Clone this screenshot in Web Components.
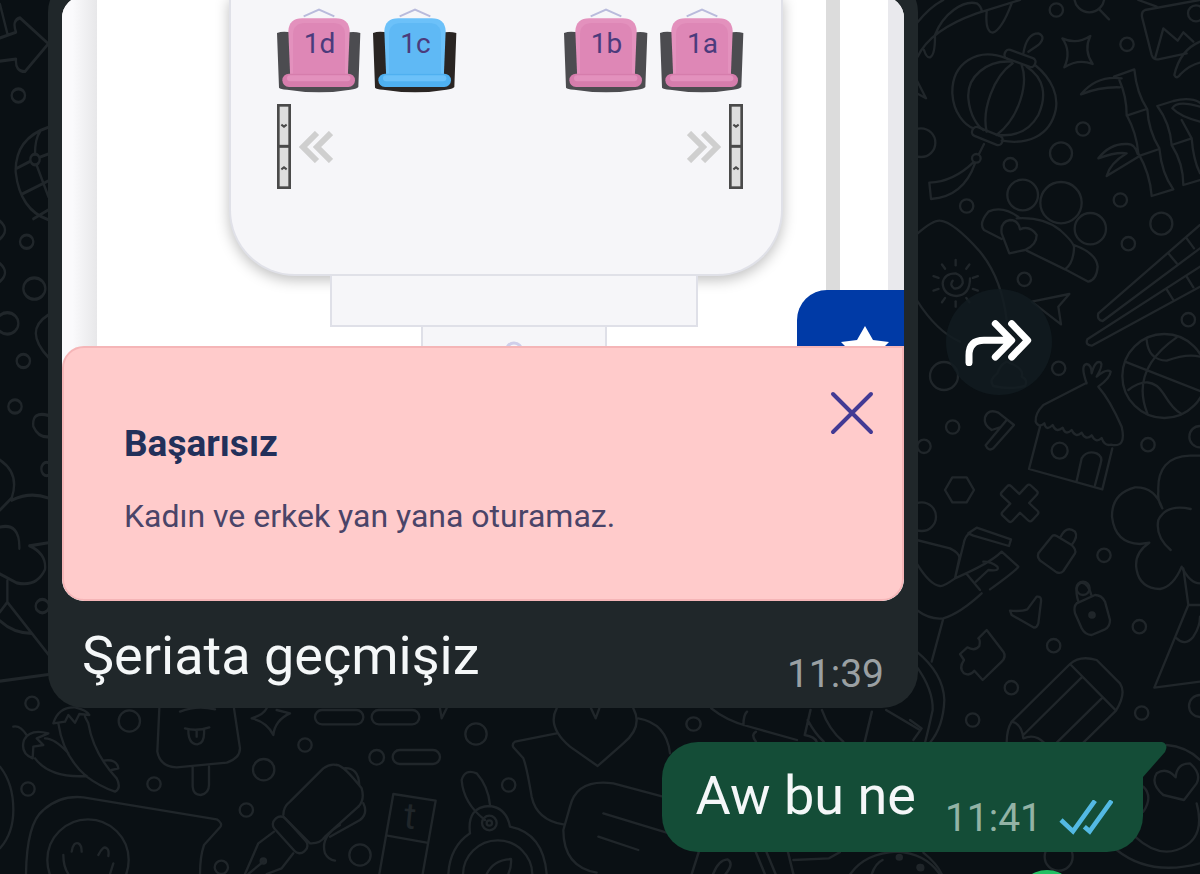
<!DOCTYPE html>
<html lang="tr">
<head>
<meta charset="utf-8">
<meta name="viewport" content="width=device-width, initial-scale=1">
<title>Sohbet</title>
<style>
    body {
        margin: 0;
        background: #0a1014;
        font-family: Roboto, "Liberation Sans", sans-serif;
    }
</style>
</head>
<body>
<chat-view>
    <chat-message time="11:39">
        <photo-card slot="media">
            <seat-map></seat-map>
            <toast-card heading="Başarısız">Kadın ve erkek yan yana oturamaz.</toast-card>
        </photo-card>
        Şeriata geçmişiz
        <forward-button slot="action"></forward-button>
    </chat-message>
    <chat-message time="11:41" mine>Aw bu ne</chat-message>
</chat-view>

<script>
class BaseElement extends HTMLElement {
    constructor() {
        super();

        this.attachShadow({ mode: 'open' });
    }

    connectedCallback() {
        this.shadowRoot.innerHTML = `<style>${this.updateStyle()}</style>${this.markup()}`;
    }
}

// Line drawings behind the conversation
class DoodleBackdrop extends BaseElement {
    updateStyle() {
        return `
            :host { display: block; }
            svg { display: block; width: 100%; height: 100%; }
            g { fill: none; stroke: #20262a; stroke-width: 7; stroke-linecap: round; stroke-linejoin: round; }
            .dot { fill: #20262a; }
            text { fill: #20262a; stroke: none; font-size: 110px; }
        `;
    }

    circles(list) {
        return list.map(([x, y, r = 20]) => `<circle cx="${x}" cy="${y}" r="${r}"/>`).join('');
    }

    ovals(list) {
        return list.map(([x, y, rx = 20, ry = 15]) => `<ellipse cx="${x}" cy="${y}" rx="${rx}" ry="${ry}"/>`).join('');
    }

    markup() {
        let rays = '';
        for (let a = 0; a < 360; a += 36) {
            rays += `<path d="M137 796V780" transform="rotate(${a} 137 850)"/>`;
        }

        return `
            <svg viewBox="0 0 3600 2622" preserveAspectRatio="xMidYMid slice" aria-hidden="true">
                <g transform="translate(2730 0)">
                    ${this.circles([[439, 30], [651, 133], [519, 387], [301, 494], [170, 618], [631, 600], [655, 731], [343, 838], [453, 460, 33], [754, 671, 33], [33, 428, 43], [858, 40, 24], [538, -8, 45]])}
                    <path d="M23 170Q60 90 200 40L330 0M20 70Q60 20 100 0M75 105C100 40 160 0 200 10Q215 20 215 35M42 150Q50 175 60 172Q75 165 75 110M230 35Q225 95 248 98Q275 90 305 10M568 28L597 58M20 240L48 295L20 280"/>
                    <path d="M457 115Q500 135 541 108Q520 150 548 192Q505 175 463 202Q485 155 457 115Z"/>
                    <path d="M868 0L705 30Q692 35 697 55L725 165Q730 180 745 178L830 160M735 175L760 85L803 122L820 97L850 125M870 125Q810 150 793 225Q800 240 812 222Q840 195 870 188M685 0L740 20"/>
                    <path d="M290 175C200 140 125 190 127 280C130 340 165 375 190 385M375 195C430 240 445 290 437 330C420 410 350 435 275 422M305 185C230 180 170 230 175 295C180 350 205 380 220 390M308 190C250 230 215 330 230 395M335 195C355 250 330 350 260 405M350 200C405 235 410 290 385 345C360 390 320 410 265 405"/>
                    <rect x="282" y="161" width="96" height="28" rx="12" transform="rotate(20 330 175)"/>
                    <rect x="184" y="394" width="96" height="28" rx="12" transform="rotate(22 232 408)"/>
                    <circle cx="199" cy="475" r="13"/>
                    <path d="M340 160Q350 100 385 100Q410 110 385 135L355 155M222 432L207 462M190 487Q130 545 58 548L63 597Q160 590 195 490"/>
                    <path d="M612 230L673 208Q680 280 712 328Q715 390 748 445Q755 520 790 568L725 588Q720 520 685 460Q680 400 650 345Q650 290 628 240M650 347L710 327M690 467L748 447M635 235Q560 225 513 283Q570 260 630 262M683 462Q675 430 650 432Q600 430 565 475Q620 455 650 460Q600 490 590 528L685 470"/>
                    <path d="M870 540L820 555Q820 490 785 435Q780 370 742 318L790 303Q840 290 870 308M785 435L845 415Q850 480 870 520M870 320Q800 300 787 325Q810 350 870 365M815 360L845 415"/>
                    ${this.circles([[338, 585, 46], [453, 608, 62], [541, 686, 47]])}
                    <path d="M330 655Q280 615 235 635Q205 670 222 690L275 717M320 655Q400 650 450 690Q495 730 492 745Q490 790 465 808L350 752M492 735Q560 760 563 800Q560 840 535 845L465 808M298 760L275 700Q270 665 300 660Q325 660 330 688Q360 675 380 705Q380 735 345 750Z"/>
                    <path d="M23 700Q70 660 90 662Q130 665 210 755Q275 835 290 960M180 835Q180 885 140 888Q100 885 98 850Q102 820 137 820Q160 828 158 850Q150 868 132 865Q118 855 128 842"/>
                    ${rays}
                    <path d="M870 675L565 940Q560 960 578 963L870 745M775 760L800 790M830 715L852 745M870 800L532 1018Q525 1035 545 1037L870 860M770 868L790 900M830 830L850 862"/>
                </g>
                <g transform="translate(2730 870)">
                    ${this.circles([[102, 258, 42], [446, 235], [835, 89], [128, 411], [42, 469], [714, 464], [582, 796], [35, 680, 43], [870, 440, 32], [519, 895], [763, 258, 126], [449, 482, 24]])}
                    <path d="M20 30Q80 125 150 155M365 35L478 12L445 50L453 103ZM127 562H170L192 600L170 637H127L105 600Z"/>
                    <path d="M-12-62h24q8 0 8 8v34h34q8 0 8 8v24q0 8-8 8h-34v34q0 8-8 8h-24q-8 0-8-8v-34h-34q-8 0-8-8v-24q0-8 8-8h34v-34q0-8 8-8z" transform="translate(329 640) rotate(43)"/>
                    <path d="M710 150Q715 210 770 212Q830 190 870 200M800 142Q660 240 712 370M645 215L875 305M655 300Q720 250 760 310Q790 360 815 372"/>
                    <path d="M530 278L400 345Q375 370 377 395Q385 415 403 400q5 25 25 5q10 25 30 8q8 25 27 7q12 25 30 8q12 25 30 8q12 25 30 8q8 25 28 20Q650 475 635 410Q600 330 565 290M530 280Q510 225 530 222Q545 225 545 250Q555 210 572 217Q580 225 560 260Q590 235 602 245Q600 265 565 290M390 410L357 537L577 598L607 475M500 573L515 505Q530 480 560 490Q580 500 572 520L555 585"/>
                    <path d="M270 412L245 420Q220 405 225 382Q235 355 265 368L312 405L250 475Q235 485 227 466L290 390"/>
                    <path d="M757 655Q742 630 745 605Q740 500 840 497H870M757 655Q735 590 675 592Q605 610 606 680Q615 760 690 762L718 758Q670 790 680 840Q690 895 750 897Q790 890 815 830Q840 880 870 880M842 657Q770 640 745 690Q735 740 782 780"/>
                    <path d="M425 740L385 790Q380 805 395 815L440 847Q452 852 460 843L495 790Q500 780 485 765L440 738Q430 733 425 740M452 740Q470 705 495 725Q505 740 485 765"/>
                    <path d="M175 730L200 713L303 748L297 768L190 737ZM180 730Q165 735 160 765L135 865M20 750L120 775Q150 790 148 805L135 865Q100 890 90 888Q60 885 20 820M135 865Q240 820 275 785L325 830Q320 840 240 898M210 900L170 852M198 875L235 840Q270 845 262 830Q245 815 220 815"/>
                    <path d="M290 215Q345 235 335 260Q355 270 345 288Q300 300 250 288Q235 270 262 250Q270 225 290 215"/>
                </g>
                <g transform="translate(2730 1680)">
                    ${this.circles([[431, 257], [304, 383], [188, 480], [688, 200], [695, 459], [870, 438, 33], [446, 890, 42]])}
                    <circle class="dot" cx="546" cy="165" r="8"/>
                    <circle class="dot" cx="32" cy="923" r="8"/>
                    <path d="M20 150Q60 180 100 175Q150 160 215 100M100 175L65 305M20 275Q100 340 103 420Q100 500 60 548M20 320Q70 390 68 450Q55 510 45 548M0 480L35 505L10 540"/>
                    <path d="M300 152Q335 155 352 148L380 110Q395 108 393 125L385 190Q380 205 370 202L305 165Z"/>
                    <path d="M500 130L555 105Q575 105 585 125L600 180Q600 200 585 208L545 225Q525 225 515 205L495 160Q490 140 500 130M505 125Q490 75 515 68Q535 70 545 108"/>
                    <path d="M230 210L280 275Q290 290 275 305L218 360L193 332Q180 350 162 340Q145 325 162 300L150 282L172 262Q195 275 208 258Q212 240 205 235Z"/>
                    <path d="M480 312L305 485Q290 510 290 548M480 312Q510 285 560 300L630 370Q650 400 618 452L520 548M480 312L618 452M515 352L340 525M575 415L440 548M305 485Q335 490 340 535Q375 520 402 548"/>
                    <path d="M820 25L835 135L733 383L870 365M835 135H870M800 235Q825 260 850 230Q870 200 870 170"/>
                    <path d="M770 555Q830 560 870 600M822 720L760 705Q720 670 740 640Q770 620 797 652Q800 610 840 610Q875 640 860 670ZM675 830Q740 890 800 870Q890 840 860 730M620 870Q720 950 870 910M700 680Q730 710 700 755M40 878Q80 910 95 942"/>
                </g>
                <g transform="translate(0 2070)">
                    ${this.circles([[96, 40], [388, 93, 32], [462, 282], [791, 239, 32], [915, 165], [739, 360], [84, 297], [664, 532], [264, 510, 122]])}
                    <path d="M40 110Q60 105 80 135M98 205Q60 190 72 150Q90 115 145 130L110 145L130 165L100 170ZM105 205Q150 265 260 258M135 145Q165 145 205 190M175 100Q190 200 260 260Q300 290 345 305Q365 295 350 265Q280 190 265 100L255 80M160 100Q175 50 225 52Q260 60 268 75L238 72L225 98L205 75L195 95ZM310 212Q350 205 355 235L335 240"/>
                    <path d="M478 55L472 185Q480 230 530 232L680 218Q720 205 720 175L702 55M578 232V290Q580 315 602 315Q627 310 627 285V230M555 115Q590 125 628 112M565 120Q565 163 592 163Q615 160 612 118M590 120V140M540 65Q590 45 645 58"/>
                    <path d="M800 55Q790 75 755 85Q800 95 820 135Q825 90 870 70L830 60"/>
                    <path d="M78 552Q80 400 130 360Q180 315 250 322L650 388Q670 400 660 412L612 465Q600 500 600 552M215 485Q220 455 235 460Q245 465 245 485M295 495Q310 465 320 475Q328 480 325 498M190 495Q190 530 205 552M340 520L330 552M0 230Q40 280 40 360Q40 430 0 475"/>
                    <rect x="805" y="412" width="130" height="45" rx="20" transform="rotate(48 870 435)"/>
                    <circle class="dot" cx="790" cy="513" r="8"/>
                    <path d="M850 375Q850 350 870 335L970 235Q990 220 1010 225M850 380L930 460Q960 462 975 440L1075 350M822 425L775 460L735 552M880 490L845 535L800 552M790 515L745 552M1020 405Q960 440 975 490Q985 510 1005 512"/>
                </g>
                <g transform="translate(990 2070)">
                    ${this.circles([[90, 495, 32], [140, 202, 22], [438, 132, 32], [536, 285], [478, 399, 22], [478, 399, 8], [503, 555, 104]])}
                    <rect x="-45" y="60" width="145" height="43" rx="21"/>
                    <rect x="125" y="60" width="143" height="43" rx="21"/>
                    <rect x="188" y="180" width="142" height="42" rx="21"/>
                    <path d="M330 55L335 85L350 55M20 225Q40 225 95 295Q105 330 85 350M40 235Q85 230 88 285M100 340Q115 370 90 390L0 440"/>
                    <path d="M148 552L190 312L317 332L278 552M172 437L290 458"/>
                    <text x="222" y="415" transform="rotate(6 240 380)">t</text>
                    <path d="M465 390Q400 340 395 270Q405 235 440 250Q475 290 480 345M420 430Q410 350 480 348Q530 355 540 410Q640 430 650 552M420 430Q360 470 355 552M470 552Q490 510 543 507Q545 530 535 552"/>
                    <path d="M680 130L555 155Q545 162 550 172L580 205Q590 230 605 320Q620 390 700 403M680 55Q650 110 720 170L803 228L880 160Q940 110 910 55M783 55L797 85L808 55M925 85Q1010 100 1020 190"/>
                    <path d="M1010 323L850 280Q740 265 720 350L700 420Q700 530 800 548M820 370L1010 428M805 440L925 480"/>
                </g>
                <g transform="translate(1920 2070) scale(1.07 1)">
                    <circle cx="150" cy="102" r="20"/>
                    <path d="M200 55Q240 90 300 108L440 150M290 105Q290 75 300 65M325 155Q310 135 325 125M478 60L462 135Q490 140 495 155M470 90Q490 130 515 155M510 60Q530 120 570 155M650 65L630 155M690 60L785 120"/>
                    <path d="M165 485L145 552M205 552Q220 510 245 508Q265 520 240 552M325 487L350 552M355 487L380 552M415 487L430 552M430 510L530 505L560 487M590 552Q630 490 720 485Q800 490 840 552M650 552Q660 520 680 510"/>
                    <circle class="dot" cx="727" cy="502" r="7"/>
                    <circle class="dot" cx="785" cy="532" r="7"/>
                </g>
                <g transform="scale(1 1.34)">
                    ${this.ovals([[55, 214], [80, 541], [70, 808], [45, 910], [103, 646, 33, 24], [22, 724, 33, 24], [127, 1357], [140, 1050, 16, 15], [105, 357, 14, 12]])}
                    <path d="M0 85L48 72Q35 45 60 40L145 98L75 160Q45 160 48 132L0 137M0 10L22 75M145 285Q45 310 47 385Q60 470 145 492M105 345Q105 310 120 295M47 378L91 361M119 352L145 345M110 370L145 440M65 435L145 405M100 490L145 470"/>
                    <path d="M0 495Q30 515 0 535M0 590Q30 610 0 630M145 705Q70 740 145 800M145 930Q95 920 100 955Q115 980 145 978M0 1030Q60 1060 35 1115L0 1142M35 1120Q90 1100 145 1115M0 1180Q60 1170 58 1228M145 1215L88 1222Q140 1240 135 1275Q110 1315 50 1305L0 1285M22 1300V1348L0 1370M22 1348L145 1465M0 1390Q40 1418 95 1418M0 1525L145 1510"/>
                </g>
            </svg>
        `;
    }
}

class ChatView extends BaseElement {
    updateStyle() {
        return `
            :host {
                position: relative;
                display: block;
                height: 100vh;
                overflow: hidden;
            }
            doodle-backdrop {
                position: absolute;
                inset: 0;
            }
            main {
                position: relative;
                box-sizing: border-box;
                height: 100%;
                padding: 0 57px 22px 48px;
                display: flex;
                flex-direction: column;
                justify-content: flex-end;
                gap: 34px;
            }
            .badge {
                position: absolute;
                right: 123px;
                bottom: -56px;
                width: 60px;
                height: 60px;
                border-radius: 50%;
                background: #21c063;
            }
        `;
    }

    markup() {
        return `
            <doodle-backdrop></doodle-backdrop>
            <main><slot></slot></main>
            <div class="badge"></div>
        `;
    }
}

class ChatMessage extends BaseElement {
    updateStyle() {
        return `
            :host {
                flex: none;
                display: flex;
                align-items: center;
                gap: 28px;
                color: #f4f7f8;
            }
            :host([mine]) { justify-content: flex-end; }
            .bubble {
                position: relative;
                box-sizing: border-box;
                flex: 0 1 870px;
                padding: 20px 14px 0;
                border-radius: 36px;
                background: #20272a;
            }
            .body {
                display: flex;
                justify-content: space-between;
                align-items: flex-end;
                height: 107px;
                padding: 0 20px;
            }
            p {
                margin: 0 0 20px;
                font-size: 54px;
                line-height: 64px;
                white-space: nowrap;
            }
            .meta {
                display: flex;
                align-items: center;
                gap: 17px;
                margin-bottom: 10px;
                font-size: 39px;
                line-height: 48px;
                color: #9aa0a3;
            }
            .ticks, .tail { display: none; }
            :host([mine]) .bubble {
                flex: none;
                padding: 0 14px;
                border-radius: 36px 0 36px 36px;
                background: #144d37;
            }
            :host([mine]) .body { height: 110px; gap: 29px; padding: 0 16px 0 20px; }
            :host([mine]) p { margin-bottom: 24px; }
            :host([mine]) .meta { color: #93b3a5; }
            :host([mine]) .ticks { display: block; }
            :host([mine]) .tail {
                display: block;
                position: absolute;
                left: 100%;
                top: 0;
            }
        `;
    }

    markup() {
        return `
            <div class="bubble">
                <slot name="media"></slot>
                <div class="body">
                    <p><slot></slot></p>
                    <div class="meta">
                        <time>${this.getAttribute('time')}</time>
                        <svg class="ticks" width="54" height="36" viewBox="0 0 162 108" fill="none" stroke="#53b9e3" stroke-width="14" aria-hidden="true">
                            <path d="M6 60L42 94L108 2M76 80L92 94L158 2"/>
                        </svg>
                    </div>
                </div>
                <svg class="tail" width="24" height="36" viewBox="0 0 24 36" aria-hidden="true">
                    <path d="M-1 0H19Q26 2 22 10L0 35H-1Z" fill="#144d37"/>
                </svg>
            </div>
            <slot name="action"></slot>
        `;
    }
}

class ForwardButton extends BaseElement {
    updateStyle() {
        return `
            :host { display: block; flex: none; }
            button {
                display: grid;
                place-items: center;
                width: 106px;
                height: 106px;
                padding: 0;
                border: 0;
                border-radius: 50%;
                background: rgba(17, 27, 33, .8);
            }
        `;
    }

    markup() {
        return `
            <button type="button" aria-label="İlet">
                <svg width="68" height="48" viewBox="0 0 204 144" fill="none" stroke="#fff" stroke-width="21" stroke-linecap="round" stroke-linejoin="round">
                    <path d="M12 134V112Q12 67 57 67H138M91 17L140 67L91 117M140 17L188 67L140 117"/>
                </svg>
            </button>
        `;
    }
}

// Stacks its children in one cell, the toast resting at the bottom
class PhotoCard extends BaseElement {
    updateStyle() {
        return `
            :host {
                display: grid;
                height: 605px;
                border-radius: 22px;
                overflow: hidden;
                background: #fff;
            }
            ::slotted(*) { grid-area: 1 / 1; min-width: 0; }
            ::slotted(toast-card) { align-self: end; }
        `;
    }

    markup() {
        return `<slot></slot>`;
    }
}

class SeatMap extends BaseElement {
    updateStyle() {
        return `
            :host {
                position: relative;
                display: grid;
                grid-template-columns: 35px 1fr 14px 48px 16px;
                height: 380px;
                overflow: hidden;
            }
            .rail { background: linear-gradient(90deg, #fafafc 30%, #e7e7e9); }
            .track { background: #dcdcdc; }
            .edge { background: #e9e9ed; }
            .bus {
                position: relative;
                box-sizing: border-box;
                width: 554px;
                height: 280px;
                margin-left: 132px;
                padding: 11px 36px 0 46px;
                border: 2px solid #e0e1e8;
                border-top: 0;
                border-radius: 0 0 66px 66px;
                background: #f6f6f9;
                box-shadow: 0 4px 14px rgba(0, 0, 0, .25);
            }
            .row {
                display: flex;
                gap: 11px;
                margin-bottom: 10px;
            }
            .aisle { flex: 1; }
            .doors { align-items: center; gap: 8px; padding-right: 2px; }
            .bumper, .hitch {
                position: relative;
                box-sizing: border-box;
                border: 2px solid #dfe0e8;
                border-top: 0;
                background: #f6f6f9;
            }
            .bumper { width: 368px; height: 51px; margin-left: 233px; }
            .hitch { width: 186px; height: 60px; margin-left: 324px; padding-top: 14px; }
            .hitch svg { display: block; margin: 0 auto; }
            .favourite {
                position: absolute;
                right: 0;
                top: 294px;
                display: flex;
                justify-content: center;
                width: 107px;
                height: 80px;
                padding: 36px 0 0 28px;
                box-sizing: border-box;
                border: 0;
                border-radius: 30px 0 0 0;
                background: #003aa6;
            }
        `;
    }

    markup() {
        return `
            <div class="rail"></div>
            <div>
                <div class="bus">
                    <div class="row">
                        <bus-seat>1d</bus-seat>
                        <bus-seat kind="male">1c</bus-seat>
                        <div class="aisle"></div>
                        <bus-seat>1b</bus-seat>
                        <bus-seat>1a</bus-seat>
                    </div>
                    <div class="row doors">
                        <bus-door></bus-door>
                        <svg width="34" height="32" viewBox="0 0 34 32" fill="none" stroke="#cfcfcf" stroke-width="6"><path d="M18 2L4 16L18 30M32 2L18 16L32 30"/></svg>
                        <div class="aisle"></div>
                        <svg width="34" height="32" viewBox="0 0 34 32" fill="none" stroke="#cfcfcf" stroke-width="6"><path d="M2 2L16 16L2 30M16 2L30 16L16 30"/></svg>
                        <bus-door></bus-door>
                    </div>
                </div>
                <div class="bumper"></div>
                <div class="hitch">
                    <svg width="20" height="20" viewBox="0 0 20 20"><circle cx="10" cy="10" r="8" fill="none" stroke="#cfcfea" stroke-width="3"/></svg>
                </div>
            </div>
            <div class="track"></div>
            <div></div>
            <div class="edge"></div>
            <button class="favourite" type="button" aria-label="Favori">
                <svg width="48" height="46" viewBox="0 0 48 46" fill="#fff"><path d="M24 0L32 14L48 16L36 28L39 45L24 37L9 45L12 28L0 16L16 14Z"/></svg>
            </button>
        `;
    }
}

class BusSeat extends BaseElement {
    updateStyle() {
        return `
            :host {
                display: block;
                --frame: #4c4c50;
                --light: #e391bd;
                --fill: #d67dac;
            }
            :host([kind="male"]) {
                --frame: #2a2523;
                --light: #6cc1f9;
                --fill: #4fb0f0;
            }
            button {
                display: grid;
                justify-items: center;
                width: 85px;
                height: 87px;
                padding: 0;
                border: 0;
                background: none;
                color: #4b3b7c;
                font: 28px/34px Roboto, sans-serif;
            }
            svg, span { grid-area: 1 / 1; }
            span { align-self: start; margin-top: 20px; z-index: 1; }
        `;
    }

    markup() {
        return `
            <button type="button">
                <svg width="85" height="87" viewBox="0 0 255 261" aria-hidden="true">
                    <path d="M80 28L126 8L172 28" fill="none" stroke="#b9bbdc" stroke-width="6"/>
                    <path d="M0 78Q20 70 46 78L40 215H212L204 78Q230 72 250 78L244 240Q238 246 220 248Q128 264 30 248Q10 246 6 242Z" style="fill: var(--frame)"/>
                    <path d="M34 72Q36 34 76 34H176Q216 34 218 72L212 220H40Z" style="fill: var(--light)"/>
                    <path d="M48 200V80Q50 48 84 48H168Q202 48 204 80V200Z" style="fill: var(--fill)" opacity=".45"/>
                    <rect x="16" y="200" width="218" height="40" rx="20" style="fill: var(--fill)"/>
                    <rect x="30" y="205" width="190" height="18" rx="9" style="fill: var(--light)"/>
                </svg>
                <span><slot></slot></span>
            </button>
        `;
    }
}

class BusDoor extends BaseElement {
    updateStyle() {
        return `
            :host { display: block; }
            svg { display: block; }
        `;
    }

    markup() {
        return `
            <svg width="14" height="85" viewBox="0 0 42 255" stroke="#4a4a4a" aria-hidden="true">
                <rect x="4" y="4" width="34" height="247" fill="#dedede" stroke-width="8"/>
                <path d="M4 127H38" stroke-width="9"/>
                <path d="M13 62L21 68L29 62M13 196L21 190L29 196" fill="none" stroke-width="6"/>
            </svg>
        `;
    }
}

class ToastCard extends BaseElement {
    updateStyle() {
        return `
            :host {
                position: relative;
                box-sizing: border-box;
                display: flex;
                justify-content: space-between;
                align-items: flex-start;
                height: 255px;
                padding: 42px 28px 0 60px;
                border: 2px solid #f5b5b7;
                border-radius: 22px 0 22px 22px;
                background: #ffcbcb;
                color: #22305a;
            }
            h2 {
                margin: 32px 0 28px;
                font-size: 37px;
                line-height: 44px;
                font-weight: 700;
            }
            p {
                margin: 0;
                font-size: 32px;
                line-height: 44px;
                color: #4a4468;
            }
            button {
                width: 46px;
                height: 46px;
                padding: 0;
                border: 0;
                background: none;
            }
            svg { display: block; }
        `;
    }

    markup() {
        return `
            <div>
                <h2>${this.getAttribute('heading')}</h2>
                <p><slot></slot></p>
            </div>
            <button type="button" aria-label="Kapat">
                <svg width="46" height="46" viewBox="0 0 46 46" stroke="#433a94" stroke-width="4" stroke-linecap="round">
                    <path d="M5 4L43 42M43 4L5 42"/>
                </svg>
            </button>
        `;
    }
}

customElements.define("doodle-backdrop", DoodleBackdrop);
customElements.define("chat-view", ChatView);
customElements.define("chat-message", ChatMessage);
customElements.define("forward-button", ForwardButton);
customElements.define("photo-card", PhotoCard);
customElements.define("seat-map", SeatMap);
customElements.define("bus-seat", BusSeat);
customElements.define("bus-door", BusDoor);
customElements.define("toast-card", ToastCard);
</script>
</body>
</html>
